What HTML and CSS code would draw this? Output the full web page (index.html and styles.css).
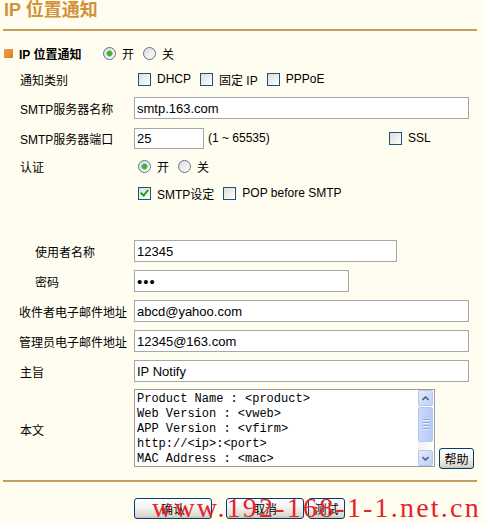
FILE: index.html
```html
<!doctype html>
<html>
<head>
    <meta charset="utf-8">
    <title>IP 位置通知</title>
    <link rel="stylesheet" href="styles.css">
</head>
<body>
<div class="titre">IP 位置通知</div>
<div class="trait"></div>

<div class="entete">
    <span class="puce"></span>
    <span class="entete-texte">IP 位置通知</span>
    <label class="choix"><input type="radio" class="rond" name="notif" checked>开</label>
    <label class="choix"><input type="radio" class="rond" name="notif">关</label>
</div>

<div class="ligne h26">
    <div class="libelle">通知类别</div>
    <div class="valeur">
        <label class="choix"><input type="checkbox" class="case">DHCP</label>
        <label class="choix"><input type="checkbox" class="case">固定 IP</label>
        <label class="choix"><input type="checkbox" class="case">PPPoE</label>
    </div>
</div>

<div class="ligne h32">
    <div class="libelle">SMTP服务器名称</div>
    <input type="text" class="champ long" value="smtp.163.com">
</div>

<div class="ligne h28">
    <div class="libelle">SMTP服务器端口</div>
    <input type="text" class="champ court" value="25">
    <span class="plage">(1 ~ 65535)</span>
    <label class="choix"><input type="checkbox" class="case">SSL</label>
</div>

<div class="ligne h28">
    <div class="libelle">认证</div>
    <div class="valeur">
        <label class="choix"><input type="radio" class="rond" name="auth" checked>开</label>
        <label class="choix"><input type="radio" class="rond" name="auth">关</label>
    </div>
</div>

<div class="ligne h26">
    <div class="libelle"></div>
    <div class="valeur">
        <label class="choix"><input type="checkbox" class="case" checked>SMTP设定</label>
        <label class="choix"><input type="checkbox" class="case">POP before SMTP</label>
    </div>
</div>

<div class="ligne h30"></div>

<div class="ligne h30">
    <div class="libelle retrait">使用者名称</div>
    <input type="text" class="champ moyen" value="12345">
</div>

<div class="ligne h30">
    <div class="libelle retrait">密码</div>
    <input type="password" class="champ petit mdp" value="abc">
</div>

<div class="ligne h30">
    <div class="libelle serre">收件者电子邮件地址</div>
    <input type="text" class="champ long" value="abcd@yahoo.com">
</div>

<div class="ligne h30">
    <div class="libelle serre">管理员电子邮件地址</div>
    <input type="text" class="champ long" value="12345@163.com">
</div>

<div class="ligne h30">
    <div class="libelle">主旨</div>
    <input type="text" class="champ long" value="IP Notify">
</div>

<div class="ligne h86">
    <div class="libelle">本文</div>
    <div class="corps">
        <div class="zone">
            <textarea class="texte" readonly>Product Name : &lt;product&gt;
Web Version : &lt;vweb&gt;
APP Version : &lt;vfirm&gt;
http://&lt;ip&gt;:&lt;port&gt;
MAC Address : &lt;mac&gt;</textarea>
            <div class="defil">
                <div class="fleche">
                    <svg width="7" height="5" viewBox="0 0 7 5"><path d="M0.5 4 L3.5 1 L6.5 4" fill="none" stroke="#4d6185" stroke-width="1.6"/></svg>
                </div>
                <div class="piste">
                    <div class="curseur">
                        <span class="grip"></span>
                        <span class="grip"></span>
                        <span class="grip"></span>
                        <span class="grip"></span>
                    </div>
                </div>
                <div class="fleche">
                    <svg width="7" height="5" viewBox="0 0 7 5"><path d="M0.5 1 L3.5 4 L6.5 1" fill="none" stroke="#4d6185" stroke-width="1.6"/></svg>
                </div>
            </div>
        </div>
        <button type="button" class="bouton aide">帮助</button>
    </div>
</div>

<div class="trait bas"></div>

<div class="actions">
    <button type="button" class="bouton large">确认</button>
    <button type="button" class="bouton large second">取消</button>
    <button type="button" class="bouton etroit">测试</button>
</div>

<div class="filigrane">www.192-168-1-1.net.cn</div>
</body>
</html>
```

FILE: styles.css
```css
body {
    margin: 0;
    width: 485px;
    height: 523px;
    overflow: hidden;
    background-color: #fffdf0;
    font-family: "Liberation Sans", "Noto Sans CJK SC", sans-serif;
    font-size: 12px;
    color: #000;
}

.titre {
    height: 21px;
    line-height: 21px;
    padding-left: 4px;
    font-size: 18px;
    font-weight: bold;
    color: #d4913a;
}

.trait {
    height: 2px;
    margin: 8px 8px 0 3px;
    background-color: #c59c60;
}

.trait.bas {
    margin-top: 8px;
}

/* en-tete de la section */
.entete {
    display: flex;
    align-items: center;
    height: 26px;
    margin-top: 9px;
    padding-left: 4px;
}

.puce {
    width: 9px;
    height: 9px;
    margin-right: 6px;
    background: linear-gradient(135deg, #f4a448, #dc7c20);
}

.entete-texte {
    width: 84px;
    font-weight: bold;
}

.choix {
    display: inline-flex;
    align-items: center;
    gap: 6px;
    margin-right: 9px;
    white-space: nowrap;
}

/* lignes du formulaire */
.ligne {
    display: flex;
    align-items: center;
    padding-left: 20px;
}

.h26 { height: 26px; }
.h28 { height: 28px; }
.h30 { height: 30px; }
.h32 { height: 32px; }
.h86 { height: 86px; }

.libelle {
    width: 114px;
    flex-shrink: 0;
    box-sizing: border-box;
    white-space: nowrap;
}

.libelle.retrait {
    padding-left: 15px;
}

.libelle.serre {
    margin-left: -1px;
    width: 115px;
}

.valeur {
    display: flex;
    align-items: center;
    padding-left: 4px;
}

.champ {
    height: 22px;
    box-sizing: border-box;
    margin: 0;
    padding: 0 2px;
    border: 1px solid #a7a7a7;
    background-color: #fff;
    font-family: "Liberation Sans", sans-serif;
    font-size: 13px;
    color: #000;
    outline: none;
}

.mdp {
    font-size: 15px;
    letter-spacing: 1px;
}

.long { width: 335px; }
.moyen { width: 263px; }
.petit { width: 215px; }
.court { width: 70px; height: 21px; }

.plage {
    width: 181px;
    margin-left: 4px;
    white-space: nowrap;
}

/* cases et boutons radio facon XP */
.case,
.rond {
    appearance: none;
    -webkit-appearance: none;
    position: relative;
    width: 13px;
    height: 13px;
    margin: 0;
    flex-shrink: 0;
    border: 1px solid #1c5180;
    background: linear-gradient(135deg, #dcdcd7, #ffffff);
}

.case:checked::after {
    content: "";
    position: absolute;
    left: 3px;
    top: 0px;
    width: 3px;
    height: 6px;
    border-right: 2px solid #21a121;
    border-bottom: 2px solid #21a121;
    transform: rotate(40deg);
}

.rond {
    border-radius: 50%;
    border-color: #5c7390;
}

.rond:checked {
    background: radial-gradient(circle, #3fae3f 0, #3fae3f 2px, #8fd08f 3px, transparent 3.5px),
                linear-gradient(135deg, #dcdcd7, #ffffff);
}

/* zone de texte */
.corps {
    display: flex;
    align-items: flex-end;
}

.zone {
    display: flex;
    width: 301px;
    height: 78px;
    box-sizing: border-box;
    margin-bottom: 2px;
    border: 1px solid #9c9c9c;
    background-color: #fff;
}

.texte {
    flex: 1;
    margin: 0;
    padding: 2px 0 0 2px;
    border: none;
    resize: none;
    overflow: hidden;
    font-family: "Liberation Mono", monospace;
    font-size: 12px;
    line-height: 15px;
    color: #000;
    background-color: #fff;
    outline: none;
}

.defil {
    display: flex;
    flex-direction: column;
    width: 15px;
    margin-right: 1px;
    background: linear-gradient(90deg, #f3f1ec, #fefefb);
}

.fleche {
    display: flex;
    align-items: center;
    justify-content: center;
    height: 16px;
    box-sizing: border-box;
    border: 1px solid #b4c8f6;
    border-radius: 2px;
    background: linear-gradient(135deg, #e4ecfe, #bccff6);
}

.piste {
    flex: 1;
    padding-top: 1px;
}

.curseur {
    display: flex;
    flex-direction: column;
    align-items: center;
    justify-content: center;
    gap: 1px;
    height: 35px;
    box-sizing: border-box;
    border: 1px solid #b4c8f6;
    border-radius: 2px;
    background: linear-gradient(90deg, #cad9fc, #b7caf5);
}

.grip {
    width: 6px;
    height: 1px;
    background-color: #8ea6e0;
    border-bottom: 1px solid #eef3ff;
}

/* boutons */
.bouton {
    height: 21px;
    margin: 0;
    padding: 0;
    border: 1px solid #003c74;
    border-radius: 3px;
    background: linear-gradient(#ffffff, #f3f2ee 45%, #dcd7cc 90%, #c8c3ba);
    font-family: "Liberation Sans", "Noto Sans CJK SC", sans-serif;
    font-size: 12px;
    color: #000;
}

.aide {
    width: 35px;
    margin-left: 4px;
}

.actions {
    display: flex;
    margin-top: 16px;
    padding-left: 134px;
}

.large { width: 78px; }
.etroit { width: 37px; margin-left: 4px; }
.second { margin-left: 14px; }

/* filigrane par-dessus les boutons */
.filigrane {
    position: absolute;
    left: 152px;
    top: 494px;
    font-family: "Liberation Serif", serif;
    font-size: 28px;
    line-height: 28px;
    letter-spacing: 2.2px;
    color: #e3242b;
    white-space: nowrap;
}
```
